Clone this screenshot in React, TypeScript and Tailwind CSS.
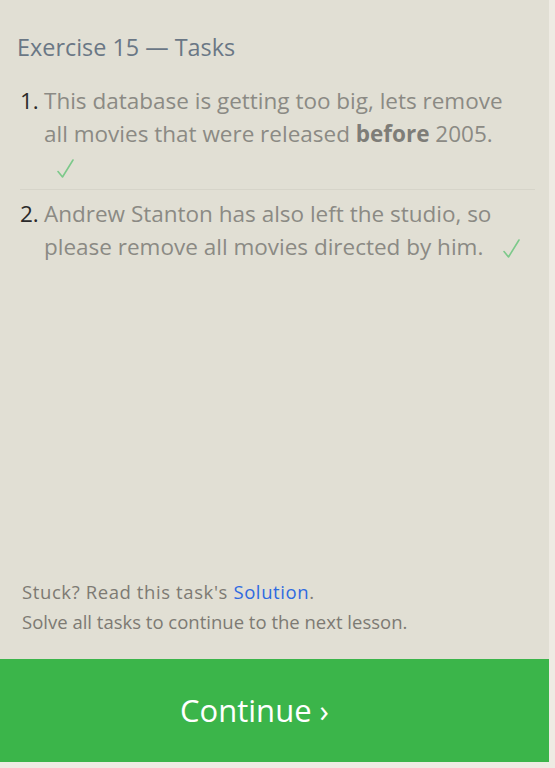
import React from "react";

function Check({ className = "" }: { className?: string }) {
  return (
    <svg
      className={"inline-block align-[-3px] " + className}
      width="17"
      height="19"
      viewBox="0 0 17 19"
      fill="none"
    >
      <path d="M1 12.5 L5.5 18 L16 1" stroke="#7cc98a" strokeWidth="1.6" strokeLinecap="round" strokeLinejoin="round" />
    </svg>
  );
}

export default function App() {
  return (
    <div className="min-h-screen bg-[#eeebe3]" style={{ fontFamily: '"Open Sans", "Noto Sans", sans-serif' }}>
      <div className="w-[549px] h-[762px] bg-[#e1dfd4] flex flex-col">
        <div className="pt-[30px] pl-[17px] text-[23.4px] leading-[34px] text-[#6a7785]">
          Exercise 15 — Tasks
        </div>
        <ol className="mt-[20px] pl-[20px] pr-[14px] text-[22.5px] leading-[33px]">
          <li className="flex border-b border-[#d6d4c9] pb-[6px]">
            <span className="w-[24px] shrink-0 text-[#2a2a2a]">1.</span>
            <span className="text-[#8b8a84]">
              This database is getting too big, lets remove
              <br />
              all movies that were released{" "}
              <b className="font-bold text-[#7e7d78]">before</b> 2005.
              <br />
              <Check className="ml-[13px]" />
            </span>
          </li>
          <li className="flex pt-[7px]">
            <span className="w-[24px] shrink-0 text-[#2a2a2a]">2.</span>
            <span className="text-[#8b8a84]">
              Andrew Stanton has also left the studio, so
              <br />
              please remove all movies directed by him.
              <Check className="ml-[20px]" />
            </span>
          </li>
        </ol>
        <div className="flex-1" />
        <div className="pl-[22px] pb-[22px] text-[18.5px] leading-[30px] text-[#7d7a73]">
          <div>
            <span className="tracking-[0.6px]">Stuck? Read this task's </span>
            <span className="text-[#2f6ae0] tracking-[0.6px]">Solution</span>.
          </div>
          <div>Solve all tasks to continue to the next lesson.</div>
        </div>
        <div className="h-[103px] bg-[#3bb54a] flex items-center justify-center pr-[40px] text-white text-[31px]">
          Continue ›
        </div>
      </div>
    </div>
  );
}
